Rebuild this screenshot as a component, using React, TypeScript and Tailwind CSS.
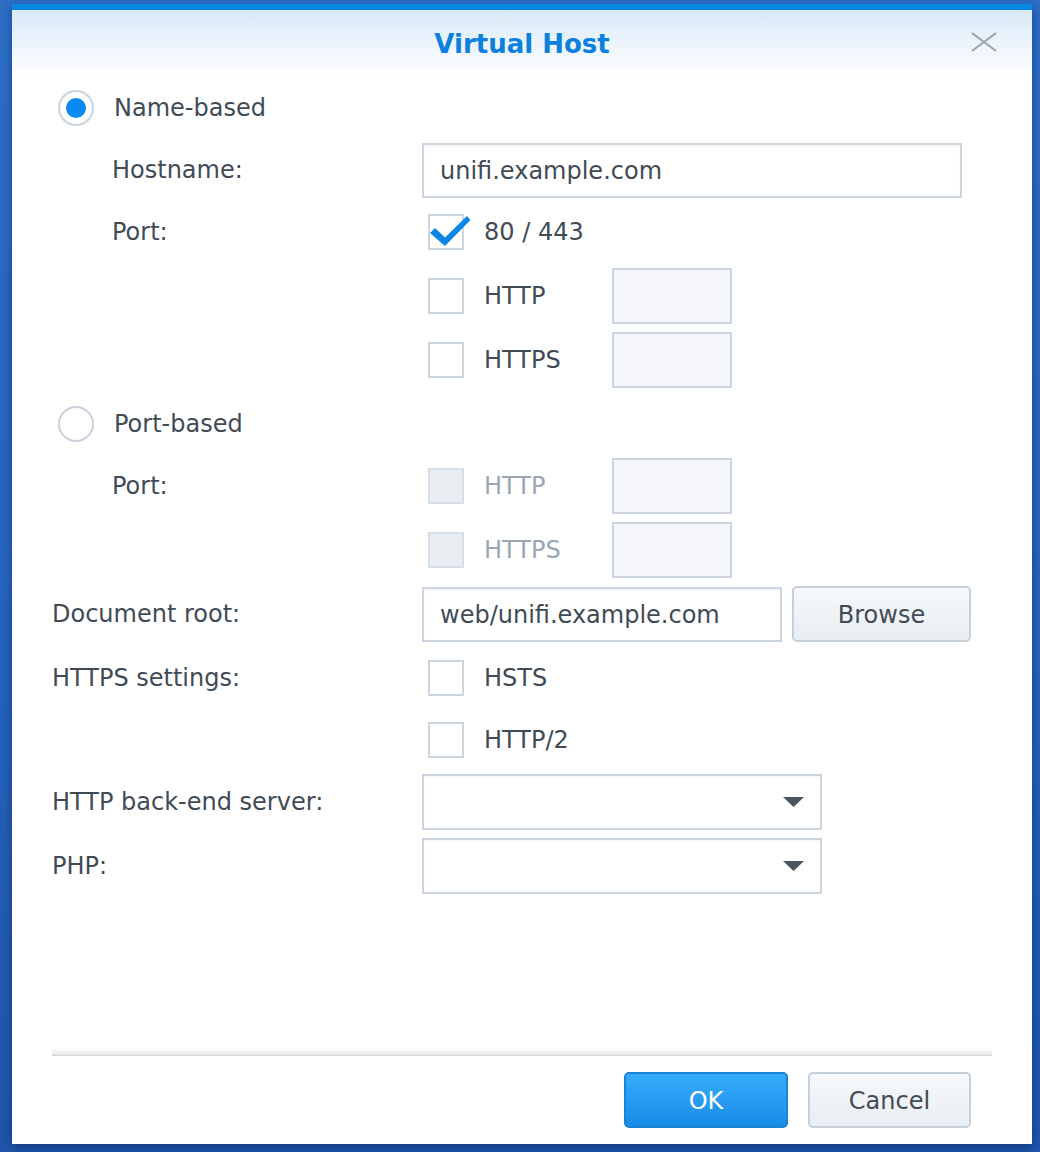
import React from "react";

const font = { fontFamily: '"DejaVu Sans", Verdana, sans-serif' };

function Radio({ checked, label }: { checked?: boolean; label: string }) {
  return (
    <div className="flex h-[36px] items-center pl-[6px]">
      <span className="flex h-[36px] w-[36px] items-center justify-center rounded-full border-2 border-[#c9d3de] bg-white">
        {checked && <span className="h-[20px] w-[20px] rounded-full bg-[#0a8af0]" />}
      </span>
      <span className="ml-[20px] text-[24px] text-[#414b55]">{label}</span>
    </div>
  );
}

function Check({
  checked,
  disabled,
  label,
  labelWidth,
}: {
  checked?: boolean;
  disabled?: boolean;
  label: string;
  labelWidth?: string;
}) {
  return (
    <div className="flex items-center pl-[6px]">
      <span
        className={
          "relative h-[36px] w-[36px] border-2 " +
          (disabled ? "border-[#d6dfe8] bg-[#e9eef3]" : "border-[#cdd6e0] bg-white")
        }
      >
        {checked && (
          <svg
            className="absolute left-[-2px] top-[-2px] overflow-visible"
            width="44"
            height="36"
            viewBox="0 0 44 36"
          >
            <path d="M2 19 L7 14 L17 23.5 L39 2 L42.5 6 L17 32 Z" fill="#0a86e6" />
          </svg>
        )}
      </span>
      <span
        className={
          "ml-[20px] text-[24px] " +
          (disabled ? "text-[#9ba6b2] " : "text-[#414b55] ") +
          (labelWidth ?? "")
        }
      >
        {label}
      </span>
    </div>
  );
}

function PortBox() {
  return <div className="h-[56px] w-[120px] border-2 border-[#cdd6e0] bg-[#f5f7fa]" />;
}

function Select() {
  return (
    <div className="flex h-[56px] w-[400px] items-center justify-end border-2 border-[#cdd6e0] bg-white pr-[16px] shadow-[inset_0_2px_2px_rgba(0,0,0,0.03)]">
      <svg width="21" height="10" viewBox="0 0 21 10">
        <path d="M0 0 H21 L10.5 10 Z" fill="#4b5560" />
      </svg>
    </div>
  );
}

function Button({ children, primary, className }: { children: React.ReactNode; primary?: boolean; className?: string }) {
  return (
    <div
      className={
        "flex h-[56px] items-center justify-center rounded-[5px] border-2 pt-[2px] text-[24px] " +
        (primary
          ? "border-[#1b83d6] bg-gradient-to-b from-[#36acfd] to-[#168ce6] text-white "
          : "border-[#c6d0db] bg-gradient-to-b from-[#f7f9fb] to-[#e8edf2] text-[#414b55] ") +
        (className ?? "")
      }
    >
      {children}
    </div>
  );
}

function Row({ h, label, indent, children, className }: { h: string; label?: string; indent?: boolean; children?: React.ReactNode; className?: string }) {
  return (
    <div className={"grid grid-cols-[370px_1fr] items-center " + h + " " + (className ?? "")}>
      <div className={"text-[24px] text-[#414b55] " + (indent ? "pl-[60px]" : "pl-0")}>{label}</div>
      <div className="flex items-center">{children}</div>
    </div>
  );
}

export default function App() {
  return (
    <div className="h-[1152px] w-[1040px] overflow-hidden bg-gradient-to-b from-[#2d6fc7] via-[#2765bf] to-[#1f56ab] pl-[12px] pt-[4px]" style={font}>
      <div className="flex h-[1140px] w-[1020px] flex-col border-t-[6px] border-[#0a86e3] bg-white shadow-[0_3px_10px_rgba(0,20,60,0.45)]">
        {/* header */}
        <div className="relative flex h-[66px] items-center justify-center bg-gradient-to-b from-[#d8e9f8] to-white">
          <span className="mt-[2px] text-[26px] font-bold text-[#0b80df]">Virtual Host</span>
          <svg className="absolute right-[35px] top-[22px]" width="26" height="20" viewBox="0 0 26 20">
            <path d="M1 1 L25 19 M25 1 L1 19" stroke="#9aa1a8" strokeWidth="2" />
          </svg>
        </div>

        {/* body */}
        <div className="flex flex-1 flex-col px-[40px]">
          <div className="mt-[14px]">
            <Radio checked label="Name-based" />
          </div>
          <Row h="h-[56px] mt-[16px]" label="Hostname:" indent>
            <div className="flex h-[55px] w-[540px] items-center border-2 border-[#cdd6e0] bg-white pl-[16px] pt-[2px] text-[24px] text-[#414b55] shadow-[inset_0_2px_2px_rgba(0,0,0,0.04)]">
              unifi.example.com
            </div>
          </Row>
          <Row h="h-[64px] mt-[2px]" label="Port:" indent>
            <Check checked label="80 / 443" />
          </Row>
          <Row h="h-[64px]">
            <Check label="HTTP" labelWidth="w-[128px]" />
            <PortBox />
          </Row>
          <Row h="h-[64px]">
            <Check label="HTTPS" labelWidth="w-[128px]" />
            <PortBox />
          </Row>

          <div className="mt-[14px]">
            <Radio label="Port-based" />
          </div>
          <Row h="h-[64px] mt-[12px]" label="Port:" indent>
            <Check disabled label="HTTP" labelWidth="w-[128px]" />
            <PortBox />
          </Row>
          <Row h="h-[64px]">
            <Check disabled label="HTTPS" labelWidth="w-[128px]" />
            <PortBox />
          </Row>

          <Row h="h-[64px]" label="Document root:">
            <div className="flex h-[55px] w-[360px] items-center border-2 border-[#cdd6e0] bg-white pl-[16px] pt-[2px] text-[24px] text-[#414b55] shadow-[inset_0_2px_2px_rgba(0,0,0,0.04)]">
              web/unifi.example.com
            </div>
            <Button className="ml-[10px] w-[179px]">Browse</Button>
          </Row>
          <Row h="h-[64px]" label="HTTPS settings:">
            <Check label="HSTS" />
          </Row>
          <Row h="h-[60px]">
            <Check label="HTTP/2" />
          </Row>
          <Row h="h-[64px]" label="HTTP back-end server:">
            <Select />
          </Row>
          <Row h="h-[64px]" label="PHP:">
            <Select />
          </Row>

          <div className="flex-1" />

          {/* footer */}
          <div className="h-[8px] border-b border-[#d5d5d5] bg-gradient-to-b from-white to-[#e6e6e6]" />
          <div className="flex justify-end gap-[20px] pb-[16px] pr-[21px] pt-[16px]">
            <Button primary className="w-[164px]">OK</Button>
            <Button className="w-[163px]">Cancel</Button>
          </div>
        </div>
      </div>
    </div>
  );
}
